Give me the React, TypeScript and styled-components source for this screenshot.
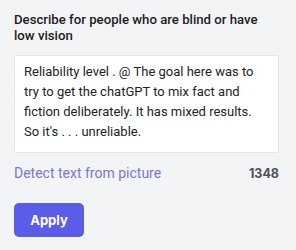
import * as React from 'react'
import styled, { createGlobalStyle } from 'styled-components'

// ***** Global
const GlobalStyle = createGlobalStyle`
  html, body {
    margin: 0;
    padding: 0;
    background: #f3f4f6;
  }
  body {
    font-family: Roboto, 'Liberation Sans', sans-serif;
  }
`

// ***** Styled Components
const Panel = styled.section`
  display: flex;
  flex-direction: column;
  width: 296px;
  height: 250px;
  box-sizing: border-box;
  padding: 12px 17px 0 14px;
  background: #f3f4f6;
`

const Title = styled.h2`
  margin: 0;
  font-size: 13.2px;
  line-height: 16px;
  font-weight: 500;
  color: #1f2023;
`

const DescriptionBox = styled.div`
  margin-top: 11px;
  box-sizing: border-box;
  height: 98px;
  padding: 6px 9px;
  background: #ffffff;
  border: 1px solid #e4e6ea;
  border-radius: 2px;
  font-size: 13px;
  line-height: 20px;
  color: #222326;
  white-space: nowrap;
`

const MetaRow = styled.div`
  display: flex;
  justify-content: space-between;
  align-items: baseline;
  margin-top: 12px;
`

const DetectLink = styled.span`
  font-size: 14px;
  color: #7b77d6;
`

const Counter = styled.span`
  font-family: Inter, sans-serif;
  font-size: 12.5px;
  font-weight: 700;
  color: #4b4f5a;
`

const ApplyButton = styled.button`
  margin-top: 22px;
  width: 70px;
  height: 34px;
  border: none;
  border-radius: 5px;
  background: #5b5ce8;
  color: #ffffff;
  font-family: Inter, sans-serif;
  font-size: 13px;
  font-weight: 700;
  cursor: pointer;
`

const lines = [
  'Reliability level . @ The goal here was to',
  'try to get the chatGPT to mix fact and',
  'fiction deliberately. It has mixed results.',
  "So it's . . . unreliable.",
]

// ***** Component
const App: React.FC = () => {
  return (
    <>
      <GlobalStyle />
      <Panel>
        <Title>Describe for people who are blind or have low vision</Title>
        <DescriptionBox>
          {lines.map((line, i) => (
            <React.Fragment key={i}>
              {line}
              {i < lines.length - 1 && <br />}
            </React.Fragment>
          ))}
        </DescriptionBox>
        <MetaRow>
          <DetectLink>Detect text from picture</DetectLink>
          <Counter>1348</Counter>
        </MetaRow>
        <ApplyButton>Apply</ApplyButton>
      </Panel>
    </>
  )
}

export default App
